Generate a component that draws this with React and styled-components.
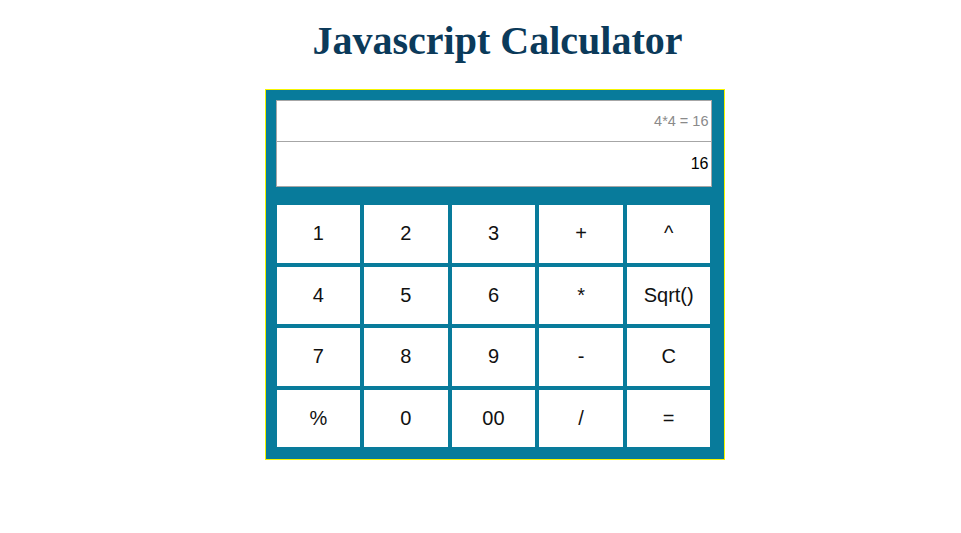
import React from 'react';
import styled, { createGlobalStyle } from 'styled-components';

const GlobalStyle = createGlobalStyle`
  body {
    margin: 0;
    background: #ffffff;
    font-family: 'Liberation Sans', Arial, sans-serif;
  }
`;

const StyledPage = styled.div`
  display: flex;
  flex-direction: column;
  align-items: center;
  padding-left: 28px;
`;

const StyledTitle = styled.h1`
  margin: 14px 0 22px 6px;
  font-family: 'Liberation Serif', 'Times New Roman', serif;
  font-size: 40px;
  font-weight: bold;
  line-height: 53px;
  color: #0b3a5a;
`;

const StyledCalculator = styled.div`
  padding: 10px 12px 12px 10px;
  background-color: #087b9b;
  border: 1px solid #f5f500;
`;

const StyledDisplay = styled.div`
  width: 434px;
  background-color: #ffffff;
  border: 1px solid #a6a6a6;
`;

const StyledLine = styled.div`
  display: flex;
  align-items: center;
  justify-content: flex-end;
  height: ${({ history }) => (history ? '40px' : '44px')};
  padding-right: 2px;
  font-size: ${({ history }) => (history ? '14.5px' : '16px')};
  color: ${({ history }) => (history ? '#8a8a8a' : '#000000')};
  border-bottom: ${({ history }) => (history ? '1px solid #a6a6a6' : 'none')};
`;

const StyledKeypad = styled.div`
  display: grid;
  grid-template-columns: repeat(5, 1fr);
  grid-auto-rows: 57.5px;
  gap: 4px;
  width: 434px;
  margin: 18px 0 0 1px;
`;

const StyledKey = styled.button`
  border: none;
  padding: 0;
  background-color: #ffffff;
  font-family: 'Liberation Sans', Arial, sans-serif;
  font-size: 20px;
  color: #111111;
  cursor: pointer;
`;

const keys = [
  '1', '2', '3', '+', '^',
  '4', '5', '6', '*', 'Sqrt()',
  '7', '8', '9', '-', 'C',
  '%', '0', '00', '/', '=',
];

const App = () => (
  <>
    <GlobalStyle />
    <StyledPage>
      <StyledTitle>Javascript Calculator</StyledTitle>
      <StyledCalculator>
        <StyledDisplay>
          <StyledLine history>4*4 = 16</StyledLine>
          <StyledLine>16</StyledLine>
        </StyledDisplay>
        <StyledKeypad>
          {keys.map((key) => (
            <StyledKey key={key}>{key}</StyledKey>
          ))}
        </StyledKeypad>
      </StyledCalculator>
    </StyledPage>
  </>
);

export default App;
